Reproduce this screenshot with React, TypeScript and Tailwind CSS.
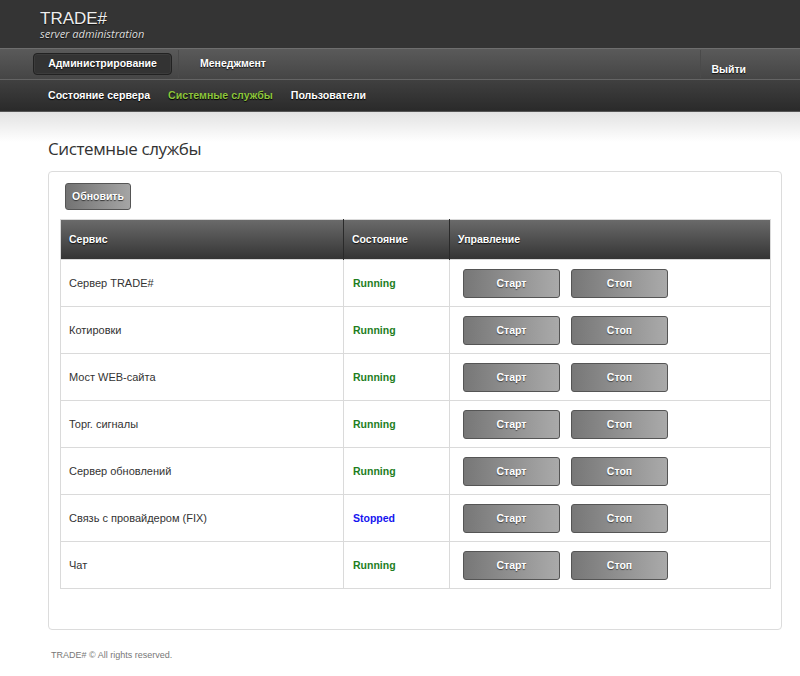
const services = [
  { name: 'Сервер TRADE#', status: 'Running' },
  { name: 'Котировки', status: 'Running' },
  { name: 'Мост WEB-сайта', status: 'Running' },
  { name: 'Торг. сигналы', status: 'Running' },
  { name: 'Сервер обновлений', status: 'Running' },
  { name: 'Связь с провайдером (FIX)', status: 'Stopped' },
  { name: 'Чат', status: 'Running' },
]

function GrayButton({ label }: { label: string }) {
  return (
    <button className="h-[29px] w-[97px] rounded-[3px] border border-[#555] bg-[linear-gradient(to_right,#777,#aaa)] text-[10.5px] font-bold text-white [text-shadow:0_1px_1px_#444]">
      {label}
    </button>
  )
}

export default function App() {
  return (
    <div className="min-h-[676px] bg-white font-['Liberation_Sans',Arial,sans-serif]">
      {/* top brand bar */}
      <header className="h-[48px] bg-[#343434] pl-[40px] pt-[10px]">
        <div className="text-[17px] leading-[17px] text-[#eee] [text-shadow:0_1px_1px_#111]">
          TRADE#
        </div>
        <div className="mt-[1px] font-['Open_Sans',sans-serif] text-[11px] leading-[12px] italic text-[#ddd] [text-shadow:0_1px_1px_#111]">
          server administration
        </div>
      </header>

      {/* main nav */}
      <nav className="flex h-[32px] items-center border-t border-b border-t-[#6e6e6e] border-b-[#646464] bg-[linear-gradient(#5a5a5a,#454545)] pl-[33px] text-[10.5px] font-bold text-white [text-shadow:0_1px_1px_#111]">
        <span className="flex h-[22px] w-[139px] items-center justify-center rounded-[4px] border border-[#222] bg-[#333] shadow-[inset_0_0_0_1px_#3c3c3c]">
          Администрирование
        </span>
        <span className="ml-[6px] h-[28px] w-px bg-[#4a4a4a]" />
        <span className="ml-[21px]">Менеджмент</span>
        <span className="ml-auto h-[28px] w-px bg-[#4a4a4a]" />
        <span className="ml-[10px] mr-[54px] mt-[12px]">Выйти</span>
      </nav>

      {/* sub nav */}
      <nav className="flex h-[32px] items-center gap-[18px] border-b border-[#555] bg-[linear-gradient(#404040,#2a2a2a)] pl-[48px] text-[10.6px] font-bold text-white [text-shadow:0_1px_1px_#000]">
        <span>Состояние сервера</span>
        <span className="text-[#8cc43c]">Системные службы</span>
        <span>Пользователи</span>
      </nav>

      <main className="bg-[linear-gradient(#e2e2e2,#fff_30px)] pl-[48px] pr-[18px] pt-[24px]">
        <h1 className="font-['Open_Sans',sans-serif] text-[17px] leading-[26px] tracking-[-0.4px] text-[#333]">
          Системные службы
        </h1>

        <section className="mt-[9px] h-[459px] rounded-[4px] border border-[#dcdcdc] pl-[11px] pr-[10px] pt-[11px]">
          <button className="ml-[5px] h-[27px] w-[66px] rounded-[3px] border border-[#555] bg-[linear-gradient(to_right,#737373,#a5a5a5)] text-[10.5px] font-bold text-white [text-shadow:0_1px_1px_#333]">
            Обновить
          </button>

          <table className="mt-[9px] w-full border-collapse border border-[#dadada] text-[10.5px]">
            <thead>
              <tr className="h-[40px] bg-[linear-gradient(#6a6a6a,#333)] text-left font-bold text-white [text-shadow:0_1px_1px_#111]">
                <th className="w-[283px] border-r border-[#2a2a2a] pl-[8px]">Сервис</th>
                <th className="w-[106px] border-r border-[#2a2a2a] pl-[8px]">Состояние</th>
                <th className="pl-[8px]">Управление</th>
              </tr>
            </thead>
            <tbody>
              {services.map((s) => (
                <tr key={s.name} className="h-[47px] border-t border-[#dadada]">
                  <td className="border-r border-[#dadada] pl-[8px] text-[11px] text-[#333]">
                    {s.name}
                  </td>
                  <td
                    className={`border-r border-[#dadada] pl-[9px] font-bold ${
                      s.status === 'Running' ? 'text-[#1e7e1e]' : 'text-[#1515f0]'
                    }`}
                  >
                    {s.status}
                  </td>
                  <td className="pl-[13px]">
                    <div className="flex gap-[11px]">
                      <GrayButton label="Старт" />
                      <GrayButton label="Стоп" />
                    </div>
                  </td>
                </tr>
              ))}
            </tbody>
          </table>
        </section>

        <footer className="pl-[3px] pt-[19px] pb-[15px] text-[9px] text-[#777]">
          TRADE# © All rights reserved.
        </footer>
      </main>
    </div>
  )
}
